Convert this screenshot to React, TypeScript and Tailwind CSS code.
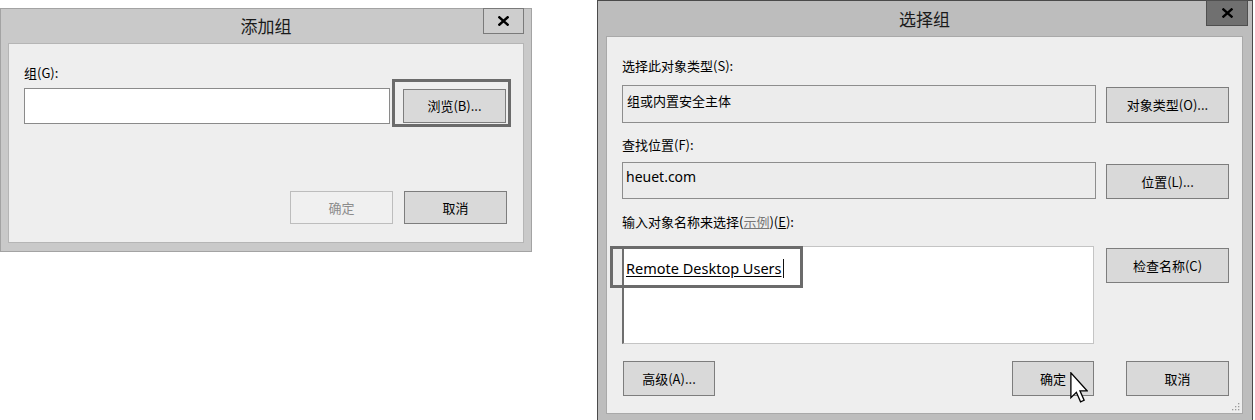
import React from "react";

const cjk = { fontFamily: '"Noto Sans CJK SC", "Noto Sans", sans-serif' };
const latin = { fontFamily: '"Noto Sans", "Noto Sans CJK SC", sans-serif' };

function Btn({ children, className = "", disabled = false }: { children: React.ReactNode; className?: string; disabled?: boolean }) {
  return (
    <div
      className={
        "relative flex items-center justify-center text-[13px] " +
        (disabled
          ? "bg-[#f0f0f0] border border-[#bdbdbd] text-[#8c8c8c] "
          : "bg-[#d9d9d9] border border-[#7d7d7d] text-[#000] ") +
        className
      }
      style={cjk}
    >
      {children}
    </div>
  );
}

function CloseX({ active }: { active: boolean }) {
  return (
    <svg width="11" height="10" viewBox="0 0 12 11">
      <path d="M1.5 1.5 L10.5 9.5 M10.5 1.5 L1.5 9.5" stroke="#000" strokeWidth={active ? 2.6 : 2.8} strokeLinecap="square" />
    </svg>
  );
}

function AddGroup() {
  return (
    <div className="mt-[8px] w-[532px] h-[244px] bg-[#c9c9c9] border border-[#a3a3a3] flex flex-col px-[7px] pb-[8px] shrink-0">
      <div className="relative h-[34px] flex items-center justify-center">
        <span className="text-[17px] text-[#1a1a1a]" style={cjk}>添加组</span>
        <div className="absolute right-[0px] top-[-1px] w-[41px] h-[26px] border border-[#7a7a7a] bg-[#cecece] flex items-center justify-center">
          <CloseX active={false} />
        </div>
      </div>
      <div className="flex-1 bg-[#eeeeee] border border-[#b5b5b5] flex flex-col pl-[15px] pt-[22px]">
        <div className="h-[13px] leading-[13px] text-[13px] text-[#000]" style={cjk}>组(G):</div>
        <div className="flex items-start">
          <div className="mt-[9px] w-[366px] h-[36px] bg-white border border-[#8a8a8a]" />
          <div className="ml-[2px] w-[119px] h-[48px] border-[3px] border-[#6b6b6b] pl-[8px] pt-[7px]">
            <Btn className="w-[103px] h-[34px]">浏览(B)...</Btn>
          </div>
        </div>
        <div className="mt-[64px] flex justify-end gap-[11px] pr-[16px]">
          <Btn disabled className="w-[103px] h-[33px]">确定</Btn>
          <Btn className="w-[103px] h-[33px]">取消</Btn>
        </div>
      </div>
    </div>
  );
}

function Cursor() {
  return (
    <svg className="absolute left-[57px] top-[10px]" width="18" height="31" viewBox="0 0 15 26">
      <path d="M0.7 0.7 L0.7 21.5 L5.3 17 L8.8 25 L11.8 23.7 L8.3 15.8 L14.3 15.8 Z" fill="#fff" stroke="#000" strokeWidth="1.1" strokeLinejoin="miter" />
    </svg>
  );
}

function SelectGroup() {
  return (
    <div className="w-[656px] h-[421px] bg-[#bdbdbd] border border-[#4a4a4a] flex flex-col pl-[8px] pr-[9px] pb-[6px] shrink-0">
      <div className="relative h-[35px] flex items-center justify-center">
        <span className="text-[17px] text-[#1a1a1a]" style={cjk}>选择组</span>
        <div className="absolute right-[-5px] top-[-1px] w-[42px] h-[26px] border border-[#4f4f4f] bg-[#707070] flex items-center justify-center">
          <CloseX active />
        </div>
      </div>
      <div className="relative flex-1 bg-[#eeeeee] border border-[#a9a9a9] flex flex-col pl-[15px] pt-[21px]">
        <div className="h-[16px] leading-[16px] text-[13px] text-[#000]" style={cjk}>选择此对象类型(S):</div>
        <div className="mt-[11px] flex items-start gap-[10px]">
          <div className="w-[474px] h-[38px] bg-[#ececec] border border-[#8d8d8d] pl-[4px] pt-[5px] text-[13px] text-[#000]" style={cjk}>组或内置安全主体</div>
          <Btn className="mt-[2px] w-[123px] h-[36px]">对象类型(O)...</Btn>
        </div>
        <div className="mt-[14px] h-[16px] leading-[16px] text-[13px] text-[#000]" style={cjk}>查找位置(F):</div>
        <div className="mt-[9px] flex items-start gap-[10px]">
          <div className="w-[474px] h-[37px] bg-[#ececec] border border-[#8d8d8d] pl-[3px] pt-[3px] text-[14px] text-[#000]" style={latin}>heuet.com</div>
          <Btn className="mt-[2px] w-[123px] h-[35px]">位置(L)...</Btn>
        </div>
        <div className="mt-[15px] h-[16px] leading-[16px] text-[13px] text-[#000]" style={cjk}>
          输入对象名称来选择(<span className="underline text-[#777]">示例</span>)(<span className="underline">E</span>):
        </div>
        <div className="mt-[16px] flex items-start gap-[12px]">
          <div className="relative w-[472px] h-[98px] bg-white border border-[#c4c4c4] border-l-[2px] border-l-[#6e6e6e]">
            <div className="absolute left-[2px] top-[11px] flex items-center text-[14.5px] text-[#000]" style={latin}>
              <span className="underline decoration-[1px] underline-offset-[2px]">Remote Desktop Users</span>
              <span className="ml-[1px] w-[1px] h-[19px] bg-[#111]" />
            </div>
            <div className="absolute left-[-14px] top-[-1px] w-[193px] h-[42px] border-[3px] border-[#6b6b6b]" />
          </div>
          <Btn className="mt-[2px] w-[123px] h-[35px]">检查名称(C)</Btn>
        </div>
        <div className="mt-[17px] flex items-start pr-[13px]">
          <Btn className="ml-[1px] w-[92px] h-[35px]">高级(A)...</Btn>
          <div className="flex-1" />
          <Btn className="w-[82px] h-[35px]">
            确定
            <Cursor />
          </Btn>
          <Btn className="ml-[32px] w-[103px] h-[35px]">取消</Btn>
        </div>
        <svg className="absolute right-[2px] bottom-[2px]" width="8" height="8" viewBox="0 0 8 8">
          <rect x="6" y="0" width="1.3" height="1.3" fill="#9a9a9a" />
          <rect x="3" y="3" width="1.3" height="1.3" fill="#9a9a9a" />
          <rect x="6" y="3" width="1.3" height="1.3" fill="#9a9a9a" />
          <rect x="0" y="6" width="1.3" height="1.3" fill="#9a9a9a" />
          <rect x="3" y="6" width="1.3" height="1.3" fill="#9a9a9a" />
          <rect x="6" y="6" width="1.3" height="1.3" fill="#9a9a9a" />
        </svg>
      </div>
    </div>
  );
}

export default function App() {
  return (
    <div className="w-[1255px] h-[420px] bg-white overflow-hidden flex items-start">
      <AddGroup />
      <div className="w-[65px] shrink-0" />
      <SelectGroup />
    </div>
  );
}
